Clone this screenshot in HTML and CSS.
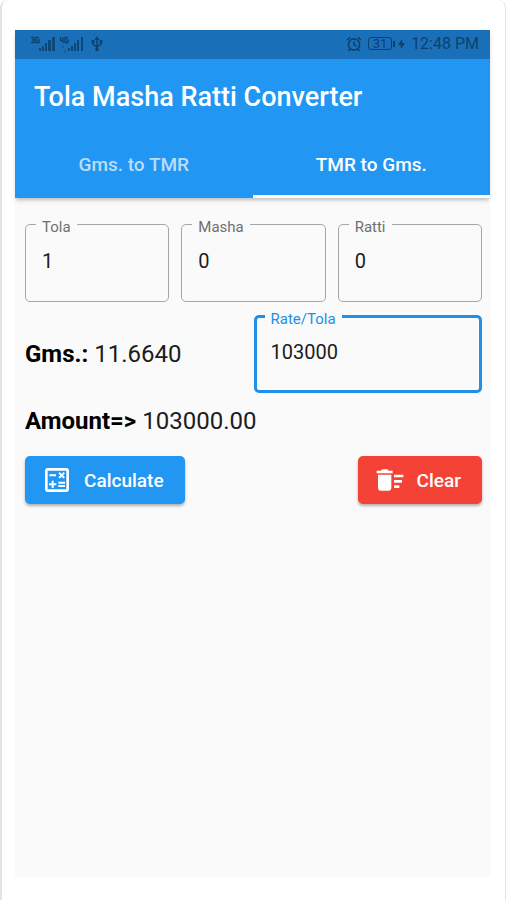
FILE: index.html
```html
<!DOCTYPE html>
<html lang="en">
<head>
<meta charset="utf-8">
<meta name="viewport" content="width=device-width, initial-scale=1">
<title>Tola Masha Ratti Converter</title>
<link rel="stylesheet" href="styles.css">
</head>
<body>
<div class="frame">
  <div class="screen">
    <header class="top">
      <div class="status">
        <svg class="signals" width="74" height="18" viewBox="0 0 74 18" aria-hidden="true">
          <g fill="none" stroke="currentColor" stroke-width="1.300">
            <path d="M0 2.500h3v5H0M1 5h2M8 2.500H5v5h3v-2.500H6.500M29.500 2v3.500h3M32 2v6M37 2.500h-3v5h3v-2.500h-1.500"/>
          </g>
          <path fill="currentColor" opacity=".85" d="M8 13h2v3H8zM11 11h2v5h-2zM14 8h2v8h-2zM17 5h3v11h-3zM21 2h3v14h-3zM37 13h2v3h-2zM40 11h2v5h-2zM43 8h2v8h-2zM46 5h2v11h-2zM50 2h2v14h-2z"/>
          <path fill="currentColor" opacity=".35" d="M30 12l3-2v4zM36 16l-3-2v4z"/>
          <path fill="none" stroke="currentColor" stroke-width="1.500" d="M66 3v11M62 6v3l4 3 4-3V6"/>
          <path fill="currentColor" d="M66 1l2.500 4h-5zM60.500 5h3v3h-3zM68.500 5h3v3h-3z"/>
          <circle cx="66" cy="14.500" r="1.800" fill="currentColor"/>
        </svg>
        <div class="status-right">
          <svg width="16" height="16" viewBox="0 0 16 16" aria-hidden="true">
            <g fill="none" stroke="currentColor" stroke-width="1.600">
              <circle cx="8" cy="8.500" r="5.600"/>
              <path d="M8 5.500v3.200l2.500 1.500M1 4l3-2.700M15 4l-3-2.700M4 13l-1.500 2M12 13l1.500 2"/>
            </g>
          </svg>
          <span class="battery"><span class="cell">31</span><span class="cap"></span>
            <svg width="7" height="10" viewBox="0 0 7 10" aria-hidden="true"><path fill="currentColor" d="M4 0L0 6h2.500L3 10l4-6H4.500z"/></svg>
          </span>
          <span>12:48 PM</span>
        </div>
      </div>
      <h1>Tola Masha Ratti Converter</h1>
      <nav class="tabs">
        <a href="#gms">Gms. to TMR</a>
        <a href="#tmr" class="active" aria-current="page">TMR to Gms.</a>
      </nav>
    </header>
    <main>
      <div class="row">
        <fieldset class="field"><legend><label for="tola">Tola</label></legend><input id="tola" type="text" value="1"></fieldset>
        <fieldset class="field"><legend><label for="masha">Masha</label></legend><input id="masha" type="text" value="0"></fieldset>
        <fieldset class="field"><legend><label for="ratti">Ratti</label></legend><input id="ratti" type="text" value="0"></fieldset>
      </div>
      <div class="rate-row">
        <p class="result"><b>Gms.:</b> 11.6640</p>
        <fieldset class="field focused"><legend><label for="rate">Rate/Tola</label></legend><input id="rate" type="text" value="103000"></fieldset>
      </div>
      <p class="result amount"><b>Amount=&gt;</b> 103000.00</p>
      <div class="actions">
        <button type="button" class="calculate">
          <svg width="32" height="32" viewBox="0 0 24 24" fill="currentColor" aria-hidden="true">
            <path d="M19 3H5c-1.100 0-2 .9-2 2v14c0 1.100.9 2 2 2h14c1.100 0 2-.9 2-2V5c0-1.100-.9-2-2-2zm0 16H5V5h14v14z"/>
            <path d="M6.250 7.720h5v1.500h-5zM13 15.750h5v1.500h-5zM13 13.250h5v1.500h-5zM8 18h1.500v-2h2v-1.500h-2v-2H8v2H6V16h2zM14.090 10.950l1.410-1.410 1.410 1.410 1.060-1.060-1.410-1.420 1.410-1.410L16.910 6 15.500 7.410 14.090 6l-1.060 1.060 1.410 1.410-1.410 1.420z"/>
          </svg>
          Calculate
        </button>
        <button type="button" class="clear">
          <svg width="32" height="32" viewBox="0 0 24 24" fill="currentColor" aria-hidden="true">
            <path d="M15 16h4v2h-4zM15 8h7v2h-7zM15 12h6v2h-6zM3 18c0 1.100.9 2 2 2h6c1.100 0 2-.9 2-2V8H3v10zM14 5h-3l-1-1H6L5 5H2v2h12z"/>
          </svg>
          Clear
        </button>
      </div>
    </main>
  </div>
</div>
</body>
</html>
```
FILE: styles.css
```css
* { box-sizing: border-box; }

body {
  margin: 0;
  background: #fff;
  color: #1c1c1c;
  font-family: Roboto, "Liberation Sans", sans-serif;
}

.frame {
  display: flex;
  min-height: 100vh;
  padding: 30px 15px 23px 13px;
  border-left: 2px solid #e6e2e4;
  border-right: 1px solid #e6e0e2;
  border-radius: 8px 8px 0 0;
}

.screen {
  flex: 1;
  min-width: 0;
  background: #fafafa;
}

.top {
  background: #2196f3;
  color: #fff;
  box-shadow: 0 3px 4px -1px rgba(0, 0, 0, .25);
}

.status {
  display: flex;
  justify-content: space-between;
  align-items: center;
  height: 29px;
  padding: 0 11px 2px 16px;
  background: #1a70b8;
  color: #0d416d;
  font-size: 16px;
}

.status-right {
  display: flex;
  align-items: center;
  gap: 6px;
}

.battery {
  display: flex;
  align-items: center;
  gap: 1px;
}

.cell {
  width: 24px;
  border: 1px solid currentColor;
  border-radius: 3px;
  font-size: 13px;
  line-height: 11px;
  text-align: center;
}

.cap {
  width: 2px;
  height: 6px;
  margin-right: 2px;
  background: currentColor;
}

h1 {
  margin: 0;
  padding: 0 19px;
  font-size: 27px;
  font-weight: 500;
  line-height: 76px;
}

.tabs { display: flex; }

.tabs a {
  flex: 1;
  border-bottom: 3px solid transparent;
  color: rgba(255, 255, 255, .7);
  font-size: 19px;
  font-weight: 500;
  line-height: 60px;
  text-align: center;
  text-decoration: none;
}

.tabs .active {
  border-color: #fff;
  color: #fff;
}

main { padding: 15px 8px 16px 10px; }

.row {
  display: flex;
  gap: 12px;
}

.field {
  flex: 1;
  min-width: 0;
  margin: 0;
  padding: 0 16px;
  border: 1px solid #a6a6a6;
  border-radius: 5px;
}

legend {
  margin-left: -6px;
  padding: 6px 6px 0;
  color: #707070;
  font-size: 15px;
  line-height: 16px;
}

.field input {
  display: block;
  width: 100%;
  height: 66px;
  padding: 0 0 14px;
  border: 0;
  outline: 0;
  background: transparent;
  color: #1c1c1c;
  font: 20px Roboto, "Liberation Sans", sans-serif;
}

.rate-row {
  display: grid;
  grid-template-columns: 1fr 1fr;
  align-items: center;
  margin-top: 3px;
}

.rate-row .result { padding-top: 10px; }

.field.focused {
  padding: 0 14px;
  border: 3px solid #2190e8;
}

.focused legend { color: #2190e8; }

.focused input { height: 63px; }

.result {
  margin: 0;
  font-size: 24px;
  line-height: 32px;
}

.result b {
  color: #000;
  font-weight: 700;
}

.amount { margin-top: 12px; }

.actions {
  display: flex;
  justify-content: space-between;
  margin-top: 19px;
}

button {
  display: flex;
  align-items: center;
  gap: 11px;
  height: 48px;
  padding: 0 21px 0 16px;
  border: 0;
  border-radius: 5px;
  color: #fff;
  font: 500 19px Roboto, "Liberation Sans", sans-serif;
  box-shadow: 0 2px 3px rgba(0, 0, 0, .3);
}

.calculate { background: #2196f3; }

.clear { background: #f44336; }
```
